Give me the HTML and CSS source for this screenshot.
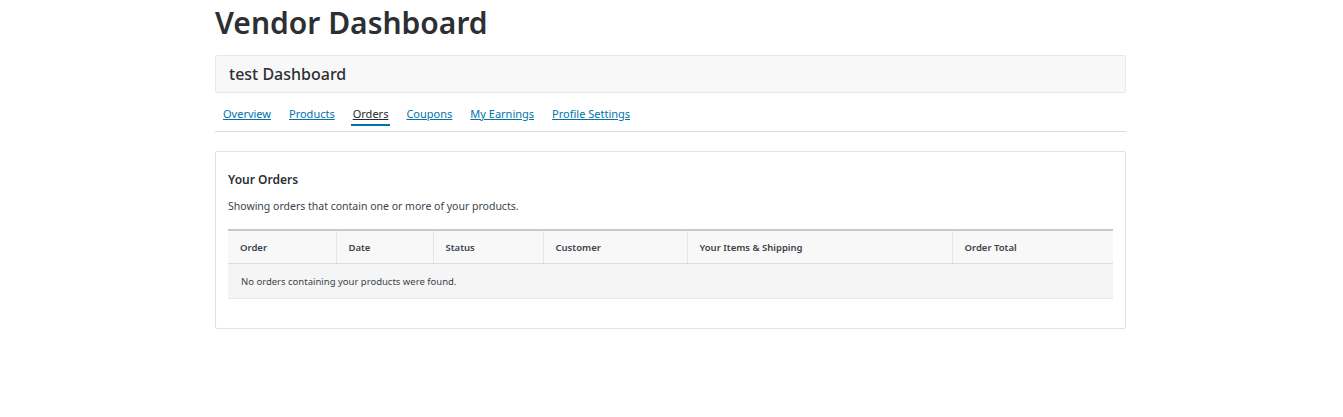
FILE: index.html
```html
<!DOCTYPE html>
<html>
<head>
<meta charset="utf-8">
<link rel="stylesheet" href="styles.css">
</head>
<body>
<div class="wrap">
  <h1 class="title">Vendor Dashboard</h1>
  <div class="store-head">test Dashboard</div>
  <nav class="tabs">
    <a class="tab" href="#">Overview</a>
    <a class="tab" href="#">Products</a>
    <a class="tab active" href="#">Orders</a>
    <a class="tab" href="#">Coupons</a>
    <a class="tab" href="#">My Earnings</a>
    <a class="tab" href="#">Profile Settings</a>
  </nav>
  <section class="card">
    <h3 class="card-title">Your Orders</h3>
    <p class="card-desc">Showing orders that contain one or more of your products.</p>
    <table class="orders">
      <colgroup>
        <col class="c-order"><col class="c-date"><col class="c-status"><col class="c-customer"><col class="c-items"><col class="c-total">
      </colgroup>
      <thead>
        <tr><th>Order</th><th>Date</th><th>Status</th><th>Customer</th><th>Your Items &amp; Shipping</th><th>Order Total</th></tr>
      </thead>
      <tbody>
        <tr><td colspan="6">No orders containing your products were found.</td></tr>
      </tbody>
    </table>
  </section>
</div>
</body>
</html>
```

FILE: styles.css
```css
html, body { margin: 0; padding: 0; background: #fff; }
body { font-family: "Noto Sans", "Open Sans", "DejaVu Sans", sans-serif; color: #32373c; }
.wrap { width: 911px; margin: 0 0 0 215px; padding-top: 3px; }
.title { font-size: 30px; font-weight: 600; margin: 0; line-height: 40px; color: #2c2f33; }
.store-head { margin-top: 12px; height: 36px; border: 1px solid #e8e8e8; border-radius: 2px; background: #f8f8f8; font-size: 16px; font-weight: 500; line-height: 36px; padding-left: 13px; color: #2c2f33; }
.tabs { display: flex; margin-top: 10px; padding-left: 6px; border-bottom: 1px solid #dcdcdc; height: 29px; box-sizing: border-box; }
.tab { font-size: 11px; color: #0073aa; text-decoration: underline; padding: 2px 2px 0; margin-right: 14px; height: 23px; box-sizing: border-box; line-height: 18px; }
.tab.active { color: #23282d; border-bottom: 2px solid #0073aa; }
.card { margin-top: 19px; border: 1px solid #e2e2e2; border-radius: 2px; padding: 13px 12px 29px; }
.card-title { margin: 6px 0 0; font-size: 12px; font-weight: 600; line-height: 18px; color: #2c2f33; }
.card-desc { margin: 9px 0 0; font-size: 10.5px; line-height: 16px; color: #3c434a; }
.orders { margin-top: 15px; width: 885px; border-collapse: collapse; table-layout: fixed; font-size: 9.5px; }
.c-order { width: 108px; } .c-date { width: 97px; } .c-status { width: 110px; } .c-customer { width: 144px; } .c-items { width: 265px; } .c-total { width: 161px; }
.orders th { background: #f8f8f8; border-top: 2px solid #c8c8c8; border-left: 1px solid #e6e6e6; border-bottom: 1px solid #dedede; text-align: left; font-weight: 600; padding: 0 12px; height: 32px; color: #3c434a; }
.orders th:first-child { border-left: 0; }
.orders td { background: #f5f5f5; height: 34px; padding: 0 13px; color: #3c434a; border-bottom: 1px solid #e8e8e8; }
```
